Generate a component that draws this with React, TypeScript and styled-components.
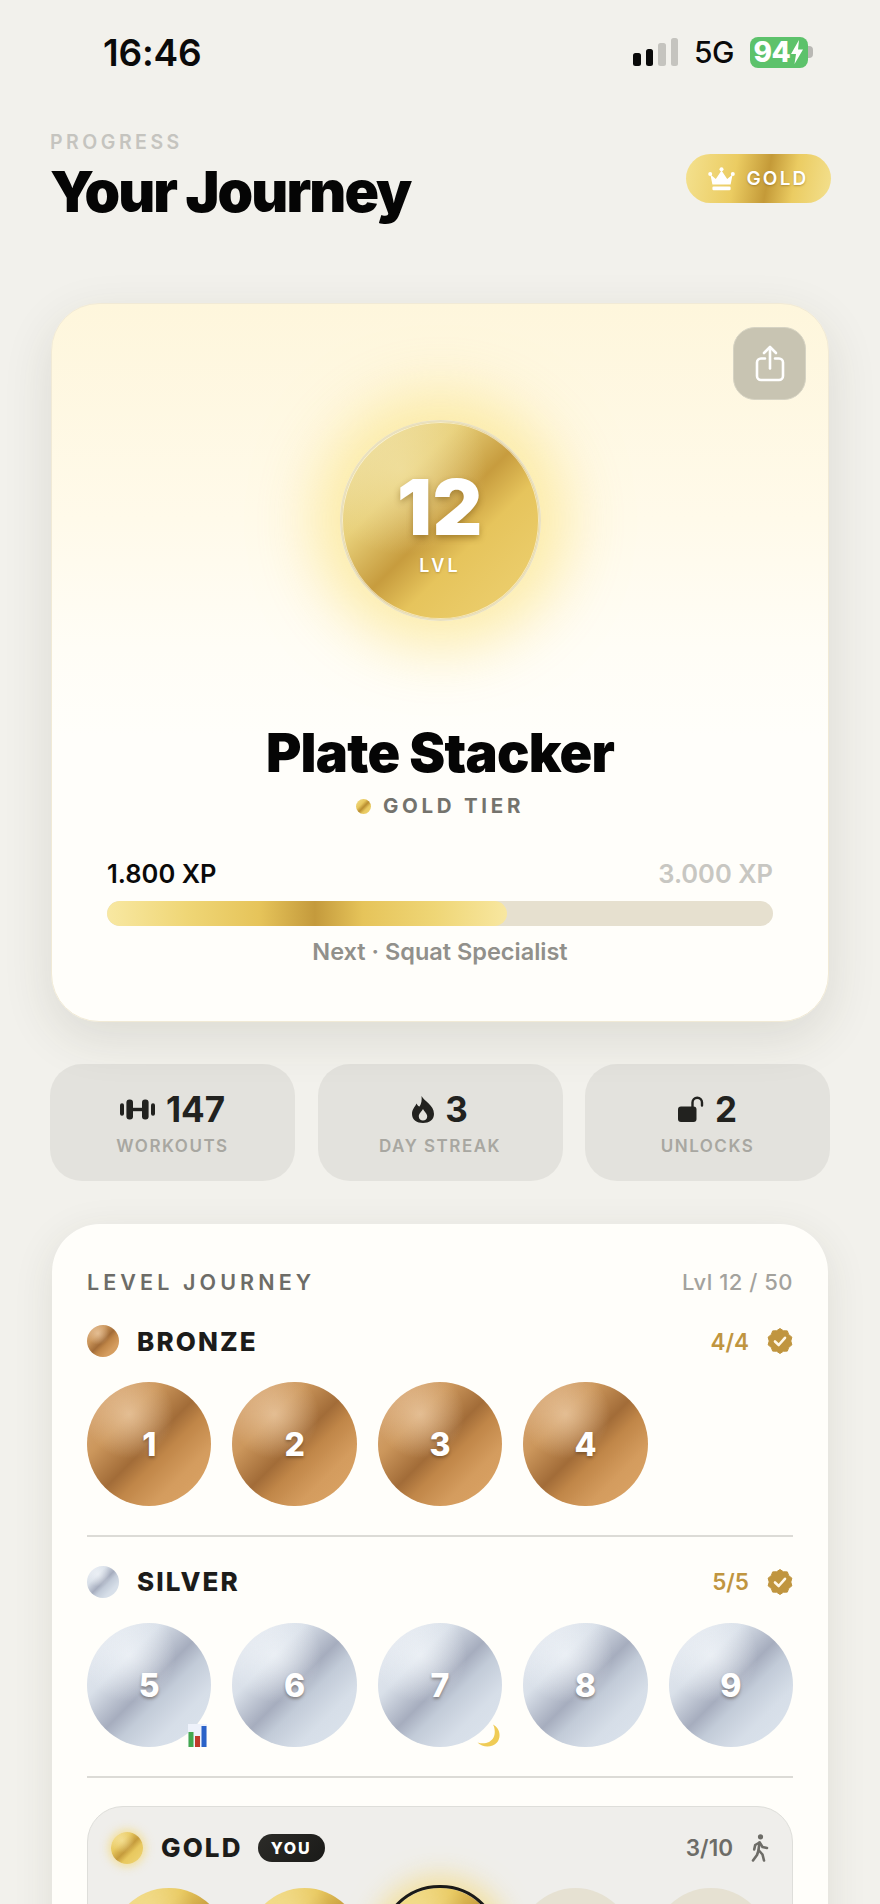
import React from "react";
import styled, { createGlobalStyle, css } from "styled-components";

const Global = createGlobalStyle`
  html, body { margin: 0; padding: 0; background: #f2f1ec; }
  * { box-sizing: border-box; }
`;

type Tier = "bronze" | "silver" | "gold" | "locked";

const tierFill: Record<Tier, ReturnType<typeof css>> = {
  bronze: css`
    background:
      radial-gradient(circle at 34% 26%, rgba(238, 206, 170, 0.7) 0%, rgba(238, 206, 170, 0) 36%),
      linear-gradient(135deg, #dcae80 0%, #cc975c 30%, #a26c38 50%, #c08648 60%, #d49c5e 76%, #dca566 100%);
  `,
  silver: css`
    background:
      radial-gradient(circle at 34% 26%, rgba(246, 249, 252, 0.6) 0%, rgba(246, 249, 252, 0) 38%),
      linear-gradient(135deg, #e9edf3 0%, #d9e0e9 30%, #a6adbe 50%, #c2cbd8 60%, #d6dee8 76%, #dde5ee 100%);
  `,
  gold: css`
    background:
      radial-gradient(circle at 34% 26%, rgba(252, 240, 190, 0.5) 0%, rgba(252, 240, 190, 0) 40%),
      linear-gradient(135deg, #f3de8c 0%, #e8c85e 32%, #c59b3c 52%, #e8c85e 66%, #f0d678 100%);
  `,
  locked: css`
    background: #e6e1d2;
  `,
};

const Page = styled.div`
  width: 880px;
  height: 1904px;
  overflow: hidden;
  padding: 0 50px;
  background: #f2f1ec;
  font-family: Inter, "Liberation Sans", sans-serif;
`;

const StatusBar = styled.div`
  height: 104px;
  padding: 0 17px 0 53px;
  display: flex;
  align-items: center;
  justify-content: space-between;
`;

const Time = styled.div`
  font-size: 37px;
  font-weight: 600;
  color: #0a0a0a;
  letter-spacing: -0.2px;
`;

const StatusRight = styled.div`
  display: flex;
  align-items: center;
`;

const Signal = styled.div`
  display: flex;
  align-items: flex-end;
  gap: 5px;
  height: 28px;
  margin-right: 16px;
`;

const SignalBar = styled.span<{ $h: number; $on: boolean }>`
  width: 7.5px;
  height: ${(p) => p.$h}px;
  border-radius: 2.5px;
  background: ${(p) => (p.$on ? "#0a0a0a" : "#c5c4bf")};
`;

const Network = styled.div`
  font-size: 30px;
  font-weight: 500;
  color: #0a0a0a;
  margin-right: 16px;
  letter-spacing: -0.5px;
`;

const Battery = styled.div`
  width: 58px;
  height: 31px;
  border-radius: 8px;
  background: #5dc26b;
  color: #fff;
  font-size: 28px;
  font-weight: 800;
  display: flex;
  align-items: center;
  justify-content: center;
  gap: 0;
  letter-spacing: -0.5px;
`;

const BatteryNub = styled.span`
  width: 5px;
  height: 12px;
  border-radius: 0 4px 4px 0;
  background: #b9b8b4;
`;

const Header = styled.header`
  margin-top: 26px;
  display: flex;
  justify-content: space-between;
  align-items: flex-start;
`;

const Eyebrow = styled.div`
  font-size: 19.5px;
  line-height: 24px;
  font-weight: 600;
  letter-spacing: 3.5px;
  color: #c5c4bf;
`;

const Title = styled.h1`
  margin: 6px 0 0;
  font-size: 57px;
  line-height: 64px;
  font-weight: 900;
  letter-spacing: -1.9px;
  color: #050505;
`;

const TierBadge = styled.div`
  margin: 24px -1px 0 0;
  width: 145px;
  height: 49px;
  border-radius: 25px;
  background: linear-gradient(100deg, #f4e18f 0%, #ebcc62 34%, #c49a38 56%, #ebcc62 74%, #f3e08e 100%);
  display: flex;
  align-items: center;
  justify-content: center;
  gap: 11px;
  color: #fff;
  font-size: 19px;
  font-weight: 600;
  letter-spacing: 2.2px;
  text-shadow: 0 1px 2px rgba(120, 85, 10, 0.45);
`;

const Hero = styled.section`
  position: relative;
  margin: 79px 1px 0;
  height: 719px;
  padding-top: 116px;
  border-radius: 48px;
  border: 1.5px solid #f1ead6;
  background: linear-gradient(180deg, #fef6dc 0%, #fffaea 30%, #fffdf6 48%, #fffefa 60%, #fffefa 100%);
  box-shadow: 0 16px 50px rgba(60, 55, 35, 0.12);
  display: flex;
  flex-direction: column;
  align-items: center;
`;

const ShareButton = styled.button`
  position: absolute;
  top: 23px;
  right: 22px;
  width: 73px;
  height: 73px;
  padding: 0;
  border: 1px solid #d6d3c3;
  border-radius: 22px;
  background: #c8c4b2;
  display: flex;
  align-items: center;
  justify-content: center;
`;

const HeroMedal = styled.div`
  width: 201px;
  height: 201px;
  border-radius: 50%;
  border: 2.5px solid #e9e0bf;
  background:
    radial-gradient(circle at 30% 24%, rgba(245, 232, 180, 0.5) 0%, rgba(245, 232, 180, 0) 42%),
    linear-gradient(135deg, #efe1a6 0%, #e8d07a 30%, #c79c3e 50%, #e6c45c 64%, #eed274 100%);
  box-shadow:
    inset 0 0 0 1px rgba(255, 255, 255, 0.55),
    0 0 60px 26px rgba(250, 226, 125, 0.62);
  display: flex;
  flex-direction: column;
  align-items: center;
  color: #fff;
`;

const HeroLevel = styled.div`
  margin-top: 47px;
  font-size: 77px;
  line-height: 76px;
  font-weight: 900;
  letter-spacing: 0.8px;
  text-shadow: 0 3px 6px rgba(110, 75, 10, 0.45);
`;

const HeroLvl = styled.div`
  margin-top: 11px;
  font-size: 18px;
  line-height: 20px;
  font-weight: 600;
  letter-spacing: 3.2px;
  text-shadow: 0 1px 2px rgba(110, 75, 10, 0.3);
`;

const RankName = styled.h2`
  margin: 102px 0 0;
  font-size: 54px;
  line-height: 60px;
  font-weight: 900;
  letter-spacing: -0.8px;
  color: #050505;
`;

const RankTier = styled.div`
  margin-top: 11px;
  display: flex;
  align-items: center;
  gap: 12px;
  font-size: 20.5px;
  line-height: 24px;
  font-weight: 700;
  letter-spacing: 3.7px;
  color: #74736d;
`;

const TinyCoin = styled.span`
  width: 15px;
  height: 15px;
  border-radius: 50%;
  background: linear-gradient(135deg, #f3de8c 0%, #e8c85e 35%, #b98d30 52%, #e8c85e 68%, #f0d678 100%);
`;

const XpBlock = styled.div`
  width: 666px;
  margin-top: 41px;
`;

const XpRow = styled.div`
  display: flex;
  justify-content: space-between;
  font-size: 25.5px;
  line-height: 30px;
  font-weight: 600;
`;

const XpNow = styled.span`
  color: #0a0a0a;
`;

const XpMax = styled.span`
  color: #c8c7c2;
`;

const Track = styled.div`
  margin-top: 12px;
  height: 25px;
  border-radius: 13px;
  background: #e6e0cf;
  overflow: hidden;
`;

const Fill = styled.div`
  height: 100%;
  border-radius: 13px;
  background: linear-gradient(90deg, #f8e8a2 0%, #efd676 20%, #e6c45a 38%, #c49a3c 52%, #e6c45a 64%, #efd676 82%, #f8e7a0 100%);
`;

const NextText = styled.div`
  margin-top: 12px;
  text-align: center;
  font-size: 23.5px;
  line-height: 28px;
  font-weight: 600;
  color: #91908b;
`;

const Stats = styled.div`
  margin-top: 42px;
  display: grid;
  grid-template-columns: repeat(3, 1fr);
  gap: 22.5px;
`;

const StatCard = styled.div`
  height: 117px;
  border-radius: 32px;
  background: #e3e2dd;
  display: flex;
  flex-direction: column;
  align-items: center;
  padding-top: 24px;
`;

const StatValue = styled.div`
  display: flex;
  align-items: center;
  gap: 11px;
  font-size: 35px;
  line-height: 42px;
  font-weight: 700;
  color: #22221f;
`;

const StatLabel = styled.div`
  margin-top: 5px;
  font-size: 17px;
  line-height: 22px;
  font-weight: 600;
  letter-spacing: 1.5px;
  color: #a8a7a1;
`;

const Journey = styled.section`
  margin: 43px 2px 0;
  padding: 46px 35px 40px;
  height: 800px;
  border-radius: 48px;
  background: #fffefa;
  box-shadow: 0 10px 40px rgba(60, 55, 35, 0.1);
`;

const JourneyHead = styled.div`
  display: flex;
  align-items: center;
  justify-content: space-between;
  height: 24px;
`;

const JourneyTitle = styled.div`
  font-size: 21.5px;
  font-weight: 600;
  letter-spacing: 4.1px;
  color: #6d6c67;
`;

const JourneyCount = styled.div`
  font-size: 22px;
  font-weight: 500;
  letter-spacing: 0.5px;
  color: #a3a29d;
`;

const TierHead = styled.div<{ $top: number }>`
  margin-top: ${(p) => p.$top}px;
  height: 32px;
  display: flex;
  align-items: center;
  justify-content: space-between;
`;

const TierName = styled.div`
  display: flex;
  align-items: center;
  gap: 18px;
  font-size: 26px;
  font-weight: 800;
  letter-spacing: 2.1px;
  color: #1c1c1a;
`;

const TierDot = styled.span<{ $tier: Tier; $glow?: boolean }>`
  width: 32px;
  height: 32px;
  border-radius: 50%;
  ${(p) => tierFill[p.$tier]}
  ${(p) => p.$glow && "box-shadow: 0 0 10px 2px rgba(245, 215, 110, 0.7);"}
`;

const TierProgress = styled.div<{ $muted?: boolean }>`
  display: flex;
  align-items: center;
  gap: 18px;
  font-size: 22.5px;
  font-weight: 600;
  color: ${(p) => (p.$muted ? "#6d6c67" : "#c0953f")};
`;

const MedalRow = styled.div<{ $top: number }>`
  margin-top: ${(p) => p.$top}px;
  display: grid;
  grid-template-columns: repeat(5, 1fr);
  gap: 21px;
`;

const Medal = styled.div<{ $tier: Tier; $current?: boolean }>`
  position: relative;
  aspect-ratio: 1;
  border-radius: 50%;
  ${(p) => tierFill[p.$tier]}
  ${(p) =>
    p.$current &&
    "outline: 3px solid #1a1a18; outline-offset: 0; box-shadow: 0 0 26px 12px rgba(245, 215, 110, 0.6);"}
  display: flex;
  align-items: center;
  justify-content: center;
  color: #fff;
  font-size: 32px;
  font-weight: 800;
  text-shadow: 0 2px 3px rgba(60, 40, 20, 0.4);
`;

const MedalBadge = styled.span<{ $right: number }>`
  position: absolute;
  right: ${(p) => p.$right}px;
  bottom: 0;
  display: flex;
  line-height: 0;
`;

const Divider = styled.hr`
  margin: 29px 0 0;
  border: 0;
  height: 1.5px;
  background: #dcdbd6;
`;

const GoldBox = styled.div`
  margin-top: 28px;
  padding: 25px 23px 24px;
  height: 400px;
  border-radius: 36px;
  border: 1.5px solid #dededa;
  background: #efeeeb;
`;

const GoldHead = styled.div`
  height: 32px;
  display: flex;
  align-items: center;
  justify-content: space-between;
`;

const YouPill = styled.span`
  margin-left: -3px;
  width: 67px;
  height: 28px;
  border-radius: 14px;
  background: linear-gradient(135deg, #2c2b28, #1a1a18);
  display: flex;
  align-items: center;
  justify-content: center;
  color: #fff;
  font-size: 16px;
  font-weight: 800;
  letter-spacing: 1.8px;
`;

const GoldRow = styled.div`
  margin-top: 24px;
  display: grid;
  grid-template-columns: repeat(5, 1fr);
  gap: 20px;
`;

const Crown = () => (
  <svg width="27" height="24" viewBox="0 0 27 24" fill="#fff">
    <circle cx="2.2" cy="7" r="2" />
    <circle cx="24.8" cy="7" r="2" />
    <circle cx="13.5" cy="2.2" r="2" />
    <path d="M2.4 7.5 L7.8 12 L13.5 3.5 L19.2 12 L24.6 7.5 L22.6 17.6 H4.4 Z" />
    <rect x="4.4" y="19.6" width="18.2" height="3.6" rx="1.2" />
  </svg>
);

const ShareIcon = () => (
  <svg width="30" height="37" viewBox="0 0 30 37" fill="none" stroke="#fff" strokeWidth="2.6" strokeLinecap="round" strokeLinejoin="round">
    <path d="M10 13.5 H6 a4 4 0 0 0 -4 4 V31 a4 4 0 0 0 4 4 H24 a4 4 0 0 0 4 -4 V17.5 a4 4 0 0 0 -4 -4 H20" />
    <path d="M15 23.5 V2.5" />
    <path d="M9 8 L15 2 L21 8" />
  </svg>
);

const DumbbellIcon = () => (
  <svg width="35" height="21" viewBox="0 0 35 21" fill="#22221f">
    <rect x="0" y="4.2" width="4" height="12.6" rx="2" />
    <rect x="6.4" y="0.5" width="6.6" height="20" rx="3" />
    <rect x="12" y="8.8" width="11" height="3.4" />
    <rect x="22" y="0.5" width="6.6" height="20" rx="3" />
    <rect x="31" y="4.2" width="4" height="12.6" rx="2" />
  </svg>
);

const FlameIcon = () => (
  <svg width="22" height="27" viewBox="0 0 22 27" fill="#22221f" fillRule="evenodd">
    <path d="M9.5 0 C12 5 22 9 22 18 C22 24 17 27 11 27 C5 27 0 24 0 18 C0 13 3 11 4.5 7.5 C5.5 9.5 6.5 10.5 7.5 10.5 C9.5 7.5 10 4 9.5 0 Z M11 13 C9.4 16 6.8 17.4 6.8 20.4 C6.8 23 8.8 24.4 11 24.4 C13.2 24.4 15.2 23 15.2 20.4 C15.2 17.4 12.4 16 11 13 Z" />
  </svg>
);

const LockOpenIcon = () => (
  <svg width="26" height="26" viewBox="0 0 26 26" fill="none">
    <rect x="0" y="10.5" width="18.5" height="15.5" rx="3" fill="#22221f" />
    <path d="M14.5 11 V6.5 a4.75 4.75 0 0 1 9.5 0 V9.5" stroke="#22221f" strokeWidth="2.4" strokeLinecap="round" />
  </svg>
);

const starburst = Array.from({ length: 20 }, (_, i) => {
  const r = i % 2 === 0 ? 12.5 : 10.8;
  const a = (i / 20) * Math.PI * 2;
  return `${(13 + r * Math.sin(a)).toFixed(2)},${(13 - r * Math.cos(a)).toFixed(2)}`;
}).join(" ");

const CheckBadge = () => (
  <svg width="26" height="26" viewBox="0 0 26 26">
    <polygon points={starburst} fill="#c0953f" stroke="#c0953f" strokeWidth="1" strokeLinejoin="round" />
    <path d="M8 13.5 L11.7 17 L18 9.8" fill="none" stroke="#fff8e8" strokeWidth="2.6" strokeLinecap="round" strokeLinejoin="round" />
  </svg>
);

const WalkIcon = () => (
  <svg width="18" height="28" viewBox="0 0 18 28" fill="none" stroke="#6d6c67" strokeWidth="2.6" strokeLinecap="round" strokeLinejoin="round">
    <circle cx="9.5" cy="2.8" r="2.6" fill="#6d6c67" stroke="none" />
    <path d="M8.5 8.5 L7.5 16 L11.5 20.5 L13 26.5" />
    <path d="M7.5 16.5 L6 21 L2 26.5" />
    <path d="M8.5 8.5 L4.2 11 L3.2 15.5" />
    <path d="M9 9 L11.5 13 L16 14" />
  </svg>
);

const ChartEmoji = () => (
  <svg width="19" height="23" viewBox="0 0 19 23">
    <rect width="19" height="23" fill="#eef2fb" />
    <rect x="0.5" y="8" width="5" height="15" fill="#43a84f" />
    <rect x="7" y="12" width="5" height="11" fill="#c0392b" />
    <rect x="13.5" y="2" width="5" height="21" fill="#2a62c8" />
  </svg>
);

const MoonEmoji = () => (
  <svg width="23" height="23" viewBox="0 0 23 23">
    <path d="M16 0.5 C23 4 24.5 13 20 18.5 C15.5 23.5 6 24 0.5 18.5 C7 20.5 13.5 19 16.5 13.5 C18.5 9.5 18 4 16 0.5 Z" fill="#efcb55" />
  </svg>
);

const BoltIcon = () => (
  <svg width="14" height="24" viewBox="0 0 14 24" fill="#fff">
    <path d="M9 0 L1 14 H6 L4.5 24 L13 9.5 H8 Z" />
  </svg>
);

const stats = [
  { icon: <DumbbellIcon />, value: "147", label: "WORKOUTS" },
  { icon: <FlameIcon />, value: "3", label: "DAY STREAK" },
  { icon: <LockOpenIcon />, value: "2", label: "UNLOCKS" },
];

const signal = [
  { h: 13, on: true },
  { h: 17, on: true },
  { h: 23, on: false },
  { h: 28, on: false },
];

export default function App() {
  return (
    <>
      <Global />
      <Page>
        <StatusBar>
          <Time>16:46</Time>
          <StatusRight>
            <Signal>
              {signal.map((b) => (
                <SignalBar key={b.h} $h={b.h} $on={b.on} />
              ))}
            </Signal>
            <Network>5G</Network>
            <Battery>
              94
              <BoltIcon />
            </Battery>
            <BatteryNub />
          </StatusRight>
        </StatusBar>

        <Header>
          <div>
            <Eyebrow>PROGRESS</Eyebrow>
            <Title>Your Journey</Title>
          </div>
          <TierBadge>
            <Crown />
            GOLD
          </TierBadge>
        </Header>

        <Hero>
          <ShareButton aria-label="Share">
            <ShareIcon />
          </ShareButton>
          <HeroMedal>
            <HeroLevel>12</HeroLevel>
            <HeroLvl>LVL</HeroLvl>
          </HeroMedal>
          <RankName>Plate Stacker</RankName>
          <RankTier>
            <TinyCoin />
            GOLD TIER
          </RankTier>
          <XpBlock>
            <XpRow>
              <XpNow>1.800 XP</XpNow>
              <XpMax>3.000 XP</XpMax>
            </XpRow>
            <Track>
              <Fill style={{ width: `${(1800 / 3000) * 100}%` }} />
            </Track>
            <NextText>Next · Squat Specialist</NextText>
          </XpBlock>
        </Hero>

        <Stats>
          {stats.map((s) => (
            <StatCard key={s.label}>
              <StatValue>
                {s.icon}
                {s.value}
              </StatValue>
              <StatLabel>{s.label}</StatLabel>
            </StatCard>
          ))}
        </Stats>

        <Journey>
          <JourneyHead>
            <JourneyTitle>LEVEL JOURNEY</JourneyTitle>
            <JourneyCount>Lvl 12 / 50</JourneyCount>
          </JourneyHead>

          <TierHead $top={31}>
            <TierName>
              <TierDot $tier="bronze" />
              BRONZE
            </TierName>
            <TierProgress>
              4/4
              <CheckBadge />
            </TierProgress>
          </TierHead>
          <MedalRow $top={25}>
            {[1, 2, 3, 4].map((n) => (
              <Medal key={n} $tier="bronze">
                {n}
              </Medal>
            ))}
          </MedalRow>
          <Divider />

          <TierHead $top={29}>
            <TierName>
              <TierDot $tier="silver" />
              SILVER
            </TierName>
            <TierProgress>
              5/5
              <CheckBadge />
            </TierProgress>
          </TierHead>
          <MedalRow $top={25}>
            {[5, 6, 7, 8, 9].map((n) => (
              <Medal key={n} $tier="silver">
                {n}
                {n === 5 && (
                  <MedalBadge $right={4}>
                    <ChartEmoji />
                  </MedalBadge>
                )}
                {n === 7 && (
                  <MedalBadge $right={2}>
                    <MoonEmoji />
                  </MedalBadge>
                )}
              </Medal>
            ))}
          </MedalRow>
          <Divider />

          <GoldBox>
            <GoldHead>
              <TierName>
                <TierDot $tier="gold" $glow />
                GOLD
                <YouPill>YOU</YouPill>
              </TierName>
              <TierProgress $muted>
                3/10
                <WalkIcon />
              </TierProgress>
            </GoldHead>
            <GoldRow>
              <Medal $tier="gold" />
              <Medal $tier="gold" />
              <Medal $tier="gold" $current />
              <Medal $tier="locked" />
              <Medal $tier="locked" />
            </GoldRow>
          </GoldBox>
        </Journey>
      </Page>
    </>
  );
}
